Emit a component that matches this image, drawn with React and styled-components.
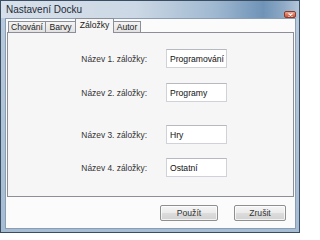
import React from 'react';
import styled, { createGlobalStyle } from 'styled-components';

const GlobalStyle = createGlobalStyle`
  html, body {
    margin: 0;
    padding: 0;
    overflow: hidden;
    background: #ffffff;
  }
`;

const Window = styled.div`
  width: 300px;
  height: 233px;
  box-sizing: border-box;
  border: 1px solid #3b4d63;
  background: linear-gradient(to bottom, #b9cbdd, #a6bcd3);
  padding: 0 3px 3px 4px;
  display: flex;
  flex-direction: column;
  font-family: "Liberation Sans", Arial, sans-serif;
`;

const TitleBar = styled.div`
  height: 17px;
  margin: 0 -3px 0 -4px;
  padding: 0 3px 0 4px;
  display: flex;
  justify-content: space-between;
  background: linear-gradient(
    to right,
    #d6e0ea 0%,
    #ccd8e5 45%,
    #9fb8d1 72%,
    #6f93b7 88%,
    #8eaac6 95%,
    #b3c6da 100%
  );
`;

const Title = styled.span`
  font-size: 10px;
  color: #1e2a36;
  line-height: 17px;
  padding-left: 1px;
`;

const CloseButton = styled.div`
  align-self: flex-end;
  width: 12px;
  height: 7px;
  box-sizing: border-box;
  border: 1px solid #8a3b2b;
  border-radius: 2px;
  background: linear-gradient(to bottom, #eba690, #c8543b);
  display: flex;
  align-items: center;
  justify-content: center;
`;

const Client = styled.div`
  flex: 1;
  display: flex;
  flex-direction: column;
  border: 1px solid #8a9db3;
  background: #fbfbfb;
  min-height: 0;
`;

const TabStrip = styled.div`
  height: 14px;
  display: flex;
  align-items: flex-end;
  padding-left: 2px;
  position: relative;
  z-index: 1;
  margin-bottom: -1px;
`;

const Tab = styled.div`
  width: ${(p) => p.$w}px;
  height: ${(p) => (p.$active ? 15 : 12)}px;
  box-sizing: border-box;
  border: 1px solid #8c8f97;
  border-bottom: ${(p) => (p.$active ? 'none' : '1px solid #8c8f97')};
  margin-right: -1px;
  background: ${(p) =>
    p.$active ? '#f6f6f6' : 'linear-gradient(to bottom, #f3f3f3, #e2e2e2)'};
  font-size: 8.6px;
  color: #222;
  display: flex;
  align-items: center;
  justify-content: center;
  padding-bottom: ${(p) => (p.$active ? 2 : 0)}px;
  position: relative;
  z-index: ${(p) => (p.$active ? 2 : 1)};
`;

const Panel = styled.div`
  flex: 1;
  margin: 0 1px;
  border: 1px solid #8c8f97;
  background: #f6f6f6;
  display: flex;
  flex-direction: column;
`;

const Field = styled.div`
  display: grid;
  grid-template-columns: 139px 61px;
  column-gap: 19px;
  align-items: center;
  margin-top: ${(p) => p.$top}px;
`;

const Label = styled.span`
  text-align: right;
  font-size: 8.4px;
  color: #333;
`;

const TextBox = styled.div`
  height: 19px;
  box-sizing: border-box;
  border: 1px solid #cfd2d8;
  border-top-color: #b6b9c0;
  background: #ffffff;
  font-size: 8.6px;
  color: #111;
  padding-left: 3px;
  display: flex;
  align-items: center;
  white-space: nowrap;
  overflow: hidden;
`;

const Footer = styled.div`
  height: 31px;
  display: flex;
  align-items: center;
  justify-content: flex-end;
  gap: 16px;
  padding-right: 9px;
`;

const Button = styled.div`
  width: ${(p) => p.$w}px;
  height: 16px;
  box-sizing: border-box;
  border: 1px solid #8e8f8f;
  border-radius: 2px;
  background: linear-gradient(to bottom, #f5f5f5 0%, #ebebeb 50%, #dddddd 51%, #d2d2d2 100%);
  box-shadow: inset 0 0 0 1px rgba(255, 255, 255, 0.7);
  font-size: 8.6px;
  color: #333;
  display: flex;
  align-items: center;
  justify-content: center;
`;

const tabs = [
  { name: 'Chování', w: 38 },
  { name: 'Barvy', w: 31 },
  { name: 'Záložky', w: 39, active: true },
  { name: 'Autor', w: 28 },
];

const fields = [
  { n: 1, value: 'Programování', top: 16 },
  { n: 2, value: 'Programy', top: 15 },
  { n: 3, value: 'Hry', top: 23 },
  { n: 4, value: 'Ostatní', top: 14 },
];

export default function App() {
  return (
    <>
      <GlobalStyle />
      <Window>
        <TitleBar>
          <Title>Nastavení Docku</Title>
          <CloseButton>
            <svg width="5" height="4" viewBox="0 0 5 4">
              <path d="M0.5 0.5 L4.5 3.5 M4.5 0.5 L0.5 3.5" stroke="#fff" strokeWidth="1.1" />
            </svg>
          </CloseButton>
        </TitleBar>
        <Client>
          <TabStrip>
            {tabs.map((t) => (
              <Tab key={t.name} $w={t.w} $active={t.active}>
                {t.name}
              </Tab>
            ))}
          </TabStrip>
          <Panel>
            {fields.map((f) => (
              <Field key={f.n} $top={f.top}>
                <Label>Název {f.n}. záložky:</Label>
                <TextBox>{f.value}</TextBox>
              </Field>
            ))}
          </Panel>
          <Footer>
            <Button $w={58}>Použít</Button>
            <Button $w={52}>Zrušit</Button>
          </Footer>
        </Client>
      </Window>
    </>
  );
}
